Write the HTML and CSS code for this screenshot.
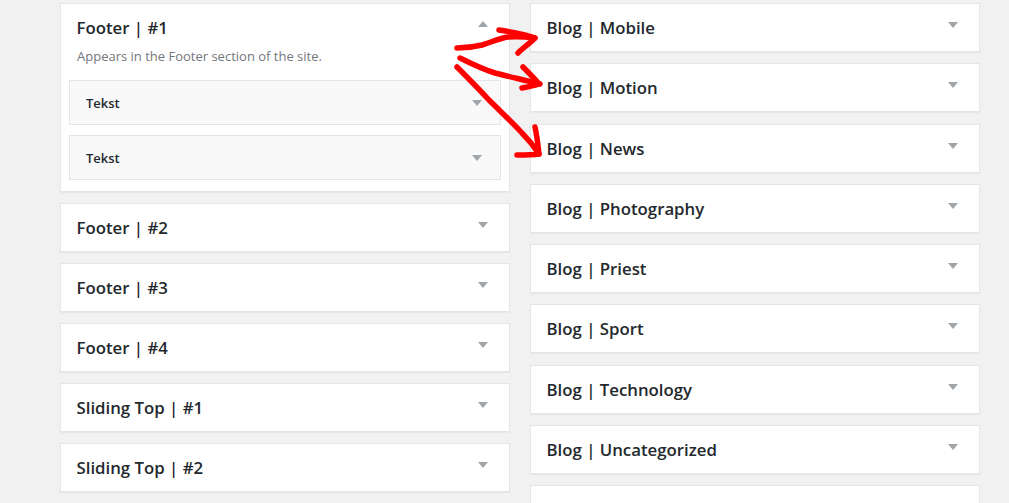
FILE: index.html
```html
<!DOCTYPE html>
<html>
<head>
<meta charset="utf-8">
<link rel="stylesheet" href="styles.css">
</head>
<body>
<div class="page">
  <div class="col">
    <div class="widget">
      <div class="widget-top"><span class="title">Footer | #1</span><span class="tri up"></span></div>
      <div class="inside">
        <p class="desc">Appears in the Footer section of the site.</p>
        <div class="inner"><span class="inner-title">Tekst</span><span class="tri small"></span></div>
        <div class="inner"><span class="inner-title">Tekst</span><span class="tri small"></span></div>
      </div>
    </div>
    <div class="widget"><div class="widget-top"><span class="title">Footer | #2</span><span class="tri"></span></div></div>
    <div class="widget"><div class="widget-top"><span class="title">Footer | #3</span><span class="tri"></span></div></div>
    <div class="widget"><div class="widget-top"><span class="title">Footer | #4</span><span class="tri"></span></div></div>
    <div class="widget"><div class="widget-top"><span class="title">Sliding Top | #1</span><span class="tri"></span></div></div>
    <div class="widget"><div class="widget-top"><span class="title">Sliding Top | #2</span><span class="tri"></span></div></div>
  </div>
  <div class="col right">
    <div class="widget"><div class="widget-top"><span class="title">Blog | Mobile</span><span class="tri"></span></div></div>
    <div class="widget"><div class="widget-top"><span class="title">Blog | Motion</span><span class="tri"></span></div></div>
    <div class="widget"><div class="widget-top"><span class="title">Blog | News</span><span class="tri"></span></div></div>
    <div class="widget"><div class="widget-top"><span class="title">Blog | Photography</span><span class="tri"></span></div></div>
    <div class="widget"><div class="widget-top"><span class="title">Blog | Priest</span><span class="tri"></span></div></div>
    <div class="widget"><div class="widget-top"><span class="title">Blog | Sport</span><span class="tri"></span></div></div>
    <div class="widget"><div class="widget-top"><span class="title">Blog | Technology</span><span class="tri"></span></div></div>
    <div class="widget"><div class="widget-top"><span class="title">Blog | Uncategorized</span><span class="tri"></span></div></div>
    <div class="widget"><div class="widget-top"><span class="title"></span></div></div>
  </div>
</div>
<svg class="scribble" width="1009" height="503" viewBox="0 0 1009 503">
  <g fill="none" stroke="#ff0000" stroke-width="5.5" stroke-linecap="round" stroke-linejoin="round">
    <path d="M457 48 C466 48 474 47 482 45 C492 42 500 38 508 37 C518 36 527 37 535 38"/>
    <path d="M499 30 C512 32 526 34 535 38 C529 44 523 48 518 53"/>
    <path d="M460 58 C472 64 482 69 495 73 C510 77 525 80 540 84"/>
    <path d="M523 67 C529 73 535 79 539 84 C533 86 527 87 522 88"/>
    <path d="M457 67 C468 78 478 88 488 99 C500 111 512 122 522 133 C530 141 535 148 539 154"/>
    <path d="M535 127 C537 136 538 145 539 154 C532 155 524 155 517 155"/>
  </g>
</svg>
</body>
</html>
```

FILE: styles.css
```css
html, body {
  margin: 0;
  padding: 0;
  background: #f1f1f1;
  font-family: "Open Sans", "Noto Sans", sans-serif;
  color: #23282d;
  overflow: hidden;
}

.page {
  display: flex;
  gap: 20px;
  padding: 3px 0 0 60px;
  height: 500px;
  overflow: hidden;
}

.col {
  width: 450px;
  display: flex;
  flex-direction: column;
}

.widget {
  background: #fff;
  border: 1px solid #e5e5e5;
  box-shadow: 0 1px 1px rgba(0, 0, 0, 0.04);
  margin-bottom: 11px;
  flex-shrink: 0;
}

.right .widget {
  margin-bottom: 11.3px;
}

.widget-top {
  height: 47px;
  display: flex;
  align-items: center;
  justify-content: space-between;
  padding: 0 21px 0 15.5px;
}

.title {
  font-size: 16.8px;
  font-weight: 600;
  line-height: 20px;
  margin-top: 1px;
}

.tri {
  width: 0;
  height: 0;
  border-left: 5px solid transparent;
  border-right: 5px solid transparent;
  border-top: 6px solid #a0a5aa;
  margin-top: -5px;
}

.tri.up {
  border-top: 0;
  border-bottom: 6px solid #a0a5aa;
  margin-top: -7px;
}

.inside {
  padding: 0 8px 11px 8px;
}

.desc {
  margin: -3px 0 16px 8px;
  font-size: 13px;
  line-height: 16px;
  color: #72777c;
}

.inner {
  background: #f9f9f9;
  border: 1px solid #e5e5e5;
  height: 43px;
  display: flex;
  align-items: center;
  justify-content: space-between;
  padding: 0 18px 0 16px;
  margin-bottom: 10px;
}

.inner:last-child {
  margin-bottom: 0;
}

.inner-title {
  font-size: 13px;
  font-weight: 600;
}

.tri.small {
  margin-top: 0;
}

.scribble {
  position: absolute;
  left: 0;
  top: 0;
  pointer-events: none;
}
```
